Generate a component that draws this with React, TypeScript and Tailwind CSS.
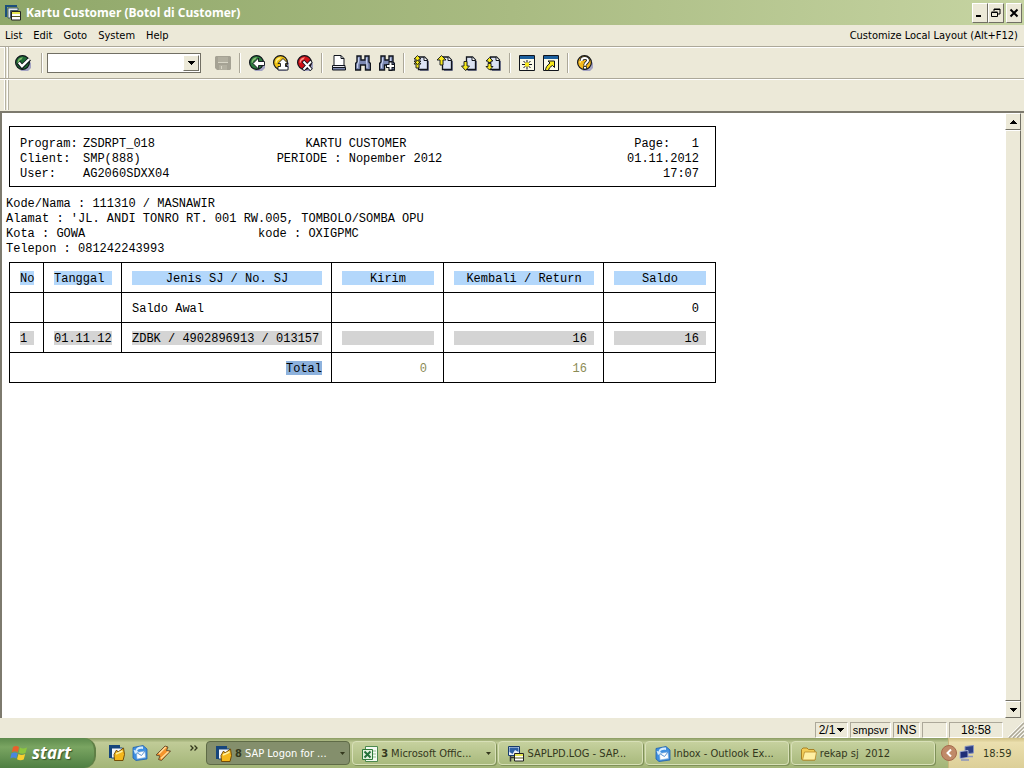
import type { ReactNode } from 'react'

const INK = '#10141c'

function Glyph({ children }: { children: ReactNode }) {
  return (
    <svg viewBox="0 0 16 16" className="h-4 w-4 shrink-0" aria-hidden="true">
      {children}
    </svg>
  )
}

function Ball({ color, light, children }: { color: string; light: string; children: ReactNode }) {
  return (
    <Glyph>
      <path d="M5 16h8l3-3V7l-3 3z" fill="#a3a3c2" />
      <circle cx="7.5" cy="7.5" r="6.9" fill={color} stroke={INK} strokeWidth="1.2" />
      <path d="M2.5 7.5c0-3 2-5 5.500-5.200L6.500 4.500C4.500 5 4 6 3.500 8z" fill={light} />
      {children}
    </Glyph>
  )
}

function EnterIcon() {
  return (
    <Ball color="#1f6a35" light="#7fb86a">
      <path d="M3.500 7.500l3.500 4L14.500 4" fill="none" stroke={INK} strokeWidth="4.200" />
      <path d="M3.800 7.500L7 11.200l7.300-7.200" fill="none" stroke="#fff" strokeWidth="2.400" />
    </Ball>
  )
}

function SaveIcon() {
  return (
    <Glyph>
      <path d="M0 2l1-1h14l1 1v12l-1 1H2l-2-2z" fill="#a5a294" />
      <path d="M3 2h10v5H3zM4 10h8v5H4z" fill="#b2afa0" />
      <path d="M3 7.500h10M6.500 11v3" stroke="#d8d5c6" strokeWidth="1" />
    </Glyph>
  )
}

function BackIcon() {
  return (
    <Ball color="#2b7a3d" light="#8cc076">
      <path d="M4 8.500l5.500-5.500v3.500h6v4h-6V14z" fill="#fff" stroke={INK} strokeWidth=".9" />
    </Ball>
  )
}

function ExitIcon() {
  return (
    <Ball color="#f2c313" light="#fff08a">
      <path d="M10 3.500l5 5h-2.500v3H15v3.500H5v-3.500h2.500v-3H5z" fill="#fff" stroke={INK} strokeWidth=".9" />
    </Ball>
  )
}

function CancelIcon() {
  return (
    <Ball color="#cf1118" light="#ff8f85">
      <path d="M6 6l8.500 9M14.500 6L6 15" stroke={INK} strokeWidth="3.600" />
      <path d="M6.500 6.500l7.500 8M14 6.500l-7.500 8" stroke="#fff" strokeWidth="1.900" />
    </Ball>
  )
}

function PrintIcon() {
  return (
    <Glyph>
      <path d="M3 .5h7l3 3v7H3z" fill="#fff" stroke={INK} />
      <path d="M10 .5v3h3" fill="none" stroke={INK} />
      <path d="M1.500 10.500h12.500v2H1.500z" fill="#e8e8f2" stroke={INK} />
      <path d="M1.500 12.500h13v2.500h-13z" fill="#7d88ad" stroke={INK} />
    </Glyph>
  )
}

function FindIcon({ next }: { next?: boolean }) {
  return (
    <Glyph>
      <path
        d="M2 1h4v4h4V1h4v6l1.500 1.500V15h-5v-5h-5v5h-5V8.500L2 7z"
        fill="#7c89b4"
        stroke={INK}
        strokeWidth="1.400"
      />
      <path d="M3.500 2.500V7l-1 2.500V13M11.500 2.500V7l.5 2.500V13" fill="none" stroke="#c6d0ec" strokeWidth="1.200" />
      {next && (
        <>
          <path d="M11.500 6v10M7 11h9" stroke={INK} strokeWidth="4" />
          <path d="M11.500 7.500v7M8 11h7" stroke="#fff" strokeWidth="2" />
        </>
      )}
    </Glyph>
  )
}

function PageIcon({ kind }: { kind: 'first' | 'prev' | 'next' | 'last' }) {
  const arrows = {
    first: 'M4.500.5L8 4H6v2h2L4.500 9.500 1 6h2V4H1zM4.500 5L8 9H6v4H3V9H1z',
    prev: 'M4.500.5L9 5H6v5H3V5H0z',
    next: 'M3 6.500h3V11h2.500L4.500 15.500.5 11H3z',
    last: 'M4.500 2.500L8 6H6v1.500H3V6H1zM4.500 15L8 11.500H6V8.500H3v3H1z',
  }
  return (
    <Glyph>
      <path d="M7 15.500h8.500V6" fill="none" stroke="#777b94" strokeWidth="1" />
      <path d="M5.500 2h6L14.500 5v9.500h-9z" fill="#dbe2f3" stroke={INK} strokeWidth="1.300" />
      <path d="M11 2v3.500h3.500" fill="#fff" stroke={INK} />
      <path d={arrows[kind]} fill="#f8e91b" stroke={INK} strokeWidth=".9" />
    </Glyph>
  )
}

function SessionIcon() {
  return (
    <Glyph>
      <path d="M.5.5h15v15H.5z" fill="#fbfae8" stroke={INK} />
      <path d="M1 1h14v3H1z" fill="#1b5f9e" />
      <path d="M8 5v3M8 11v3.500M3 9.500h3.500M9.500 9.500H13M4.500 6l2 2M11.500 6l-2 2M4.500 13l2-2M11.500 13l-2-2" stroke={INK} />
      <path d="M6 7.500h4v4H6z" fill="#f8e91b" />
    </Glyph>
  )
}

function ShortcutIcon() {
  return (
    <Glyph>
      <path d="M.5.5h15v15H.5z" fill="#fbfae8" stroke={INK} />
      <path d="M1 1h14v3H1z" fill="#1b5f9e" />
      <path d="M5 6h6.500v6.500L9.500 10.500C7 12 6 13 5.500 15.500h-3c0-3 1.500-5 4.500-7.500z" fill="#f8e91b" stroke={INK} strokeWidth="1" />
    </Glyph>
  )
}

function HelpIcon() {
  return (
    <Ball color="#f5b81c" light="#fff3a6">
      <path d="M4.500 6c0-4 6.500-4 6.500-.5 0 2-3 2.200-3 5" fill="none" stroke={INK} strokeWidth="3.600" />
      <path d="M4.500 6c0-4 6.500-4 6.500-.5 0 2-3 2.200-3 5" fill="none" stroke="#fff" strokeWidth="2" />
      <path d="M6.500 11.500h3v2.500h-3z" fill="#fff" stroke={INK} strokeWidth=".8" />
    </Ball>
  )
}

function WindowsStackIcon() {
  return (
    <Glyph>
      <path d="M0 0h12v2H2v10H0z" fill="#1c4e7c" />
      <path d="M3 3h10v2.500H5.500V13H3z" fill="#dfe6ee" stroke="#26435a" strokeWidth=".8" />
      <path d="M6.500 6.500h9v8.500h-9z" fill="#fff" stroke="#222" />
      <path d="M7 7h8v2H7z" fill="#e6e64f" />
      <path d="M7 11.500h8" stroke="#55591d" />
    </Glyph>
  )
}

function SapIcon() {
  return (
    <Glyph>
      <path d="M0 0h11v13H0z" fill="#16457c" />
      <path d="M2.500 3h11v10h-11z" fill="#f4f6fa" stroke="#16457c" />
      <path d="M5 9.500L7.500 5l1.500 2 5.500-4 1 6.500L14 15.500H5.500z" fill="#f5b81c" stroke="#6b4300" strokeWidth=".9" />
      <path d="M7 9l6.500-3" stroke="#fff0a0" strokeWidth="1.500" />
    </Glyph>
  )
}

function OutlookIcon() {
  return (
    <Glyph>
      <path d="M1 2.500L11 .5l4 3.500v10l-11 1.500L1 13z" fill="#3f8fe0" stroke="#1f5fae" strokeWidth=".8" />
      <path d="M4.500 7.500l8.500-1.500.5 6.500L5 14z" fill="#fff" stroke="#7ba9d9" strokeWidth=".6" />
      <path d="M4.500 7.500l5 3 3.500-4.500" fill="none" stroke="#5b93cf" />
      <path d="M11 1.500c-4-.5-7 1-7.500 4L1.500 4.800 3 9l3.500-2.500L5 6c1-2 3-2.500 6-2z" fill="#d5ecff" />
    </Glyph>
  )
}

function WinampIcon() {
  return (
    <Glyph>
      <path d="M1 10l9-9 3 1-1.500 3.500L15.500 6 6.500 15.500l-3-1L5 11z" fill="#f4932b" stroke="#5f4a2e" strokeWidth=".9" />
      <path d="M4 8.800L10.800 2M6 13.500l7.500-7" stroke="#ffdf9e" strokeWidth="1.400" />
    </Glyph>
  )
}

function ExcelIcon() {
  return (
    <Glyph>
      <path d="M3.500.5h12v15h-12z" fill="#f4faf2" stroke="#4d8a4f" />
      <path d="M11 5h3M11 8h3M11 11h3" stroke="#8fbf8f" />
      <path d="M.5 3.500h10v10H.5z" fill="#e3f2df" stroke="#2f7a3a" />
      <path d="M2.500 5.500l6 6M8.500 5.500l-6 6" stroke="#23713a" strokeWidth="2" />
    </Glyph>
  )
}

function SaplpdIcon() {
  return (
    <Glyph>
      <path d="M.5.5h11v9H.5z" fill="#e9eef8" stroke="#173c6c" />
      <path d="M1.500 1.500h9V6L7 4 4.500 8l-3-2z" fill="#2d5fa4" />
      <path d="M2.500 10v5.500M2 11.500h5" fill="none" stroke="#333" strokeWidth="1.500" />
      <path d="M6.500 7.500h9v7.500h-9z" fill="#fff" stroke="#222" />
      <path d="M7 8h8v2H7z" fill="#e6e64f" />
      <path d="M7 12h8" stroke="#55591d" />
    </Glyph>
  )
}

function FolderIcon() {
  return (
    <Glyph>
      <path d="M.5 3.500L2 2h4l1.500 1.500H13l1 1.500v9H1.500l-1-1z" fill="#f2cc57" stroke="#a2791c" strokeWidth=".9" />
      <path d="M3.500 6h12l-1.500 8H1.500z" fill="#fff0a3" stroke="#b98e2b" strokeWidth=".8" />
    </Glyph>
  )
}

function FlagIcon() {
  return (
    <svg viewBox="0 0 18 18" className="h-[18px] w-[18px] shrink-0" aria-hidden="true">
      <path d="M3 3c2-1.300 4-1.300 6 0L7.800 8.300C6 7 4 7 1.800 8.300z" fill="#e8602c" />
      <path d="M10 3.500c2 1.200 4 1.200 7 0L15.500 9c-2.500 1.200-4.500 1-6.800-.2z" fill="#8dc63f" />
      <path d="M1.500 9.300c2-1.200 4-1.200 6 0L6.300 14.500c-2-1.200-4-1.200-6 0z" fill="#4a86e0" />
      <path d="M8.500 10c2 1.200 4 1.200 6.700 0l-1.500 5.500c-2.500 1.200-4.500 1-6.700-.2z" fill="#f9cf2e" />
    </svg>
  )
}

function NetworkIcon() {
  return (
    <Glyph>
      <path d="M6 1.500l8.500-1v7.500l-8.500 1z" fill="#2d3f86" stroke="#8a94bd" />
      <path d="M1 6.500l8-1v7l-8 1z" fill="#1e2d77" stroke="#a9b3d4" />
      <path d="M2 15h8M9 11.500h5" stroke="#8a94bd" strokeWidth="1.600" />
    </Glyph>
  )
}

function Triangle({ up }: { up?: boolean }) {
  return (
    <svg viewBox="0 0 7 4" className="h-1 w-[7px] shrink-0" shapeRendering="crispEdges" aria-hidden="true">
      <path d={up ? 'M3 0h1l3 4H0z' : 'M0 0h7L4 4H3z'} fill="#000" />
    </svg>
  )
}

function Separator() {
  return <div className="mx-1 h-5 w-[2px] border-l border-[#aca899] bg-white" />
}

function Grip() {
  return (
    <div className="flex gap-px self-stretch">
      <div className="w-[2px] border-l border-white bg-[#b5b2a2]" />
      <div className="w-[2px] border-l border-white bg-[#b5b2a2]" />
    </div>
  )
}

function ToolButton({ label, disabled, children }: { label: string; disabled?: boolean; children: ReactNode }) {
  return (
    <button type="button" aria-label={label} disabled={disabled} className="flex h-6 w-6 items-center justify-center">
      {children}
    </button>
  )
}

function CaptionButton({ label, className = '', children }: { label: string; className?: string; children: ReactNode }) {
  return (
    <button
      type="button"
      aria-label={label}
      className={`flex h-5 w-4 items-center justify-center border border-t-white border-r-[#716f64] border-b-[#716f64] border-l-white bg-[#ece9d8] ${className}`}
    >
      <svg viewBox="0 0 10 10" className="h-[10px] w-[10px] shrink-0" aria-hidden="true">
        {children}
      </svg>
    </button>
  )
}

const menus = ['List', 'Edit', 'Goto', 'System', 'Help']

function TitleBar() {
  return (
    <header className="flex h-[25px] shrink-0 items-center bg-linear-to-r from-[#8fa769] via-[#a9bb82] to-[#c6d4a2] pr-[2px] pl-[5px]">
      <WindowsStackIcon />
      <h1 className="ml-[5px] flex-1 font-['Open_Sans','Noto_Sans',sans-serif] text-[12px] font-bold text-white">
        Kartu Customer (Botol di Customer)
      </h1>
      <CaptionButton label="Minimize">
        <path d="M1 8h5" stroke="#000" strokeWidth="2" />
      </CaptionButton>
      <CaptionButton label="Restore">
        <path d="M3 3V1h6v5H7M3 1.500h6" fill="none" stroke="#000" />
        <path d="M.5 4.500h6v4h-6zM.5 4h6" fill="none" stroke="#000" />
      </CaptionButton>
      <CaptionButton label="Close" className="ml-[2px]">
        <path d="M1.500 1.500l7 7M8.500 1.500l-7 7" stroke="#000" strokeWidth="2" />
      </CaptionButton>
    </header>
  )
}

function MenuBar() {
  return (
    <nav className="flex h-[21px] shrink-0 items-center gap-[11px] pr-1.5 pl-[5px]">
      {menus.map((item) => (
        <button key={item} type="button">
          {item}
        </button>
      ))}
      <span className="ml-auto">Customize Local Layout (Alt+F12)</span>
    </nav>
  )
}

function Toolbar() {
  return (
    <div className="flex h-8 shrink-0 items-center border-t border-[#aca899] pl-1 shadow-[inset_0_1px_0_#fff]">
      <Grip />
      <div className="ml-0.5 flex items-center">
        <ToolButton label="Enter">
          <EnterIcon />
        </ToolButton>
        <div className="w-0.5" />
        <Separator />
        <div className="flex h-5 w-[154px] border border-[#716f64] bg-white p-px">
          <input aria-label="Command" className="min-w-0 flex-1 bg-white px-1 outline-none" />
          <button
            type="button"
            aria-label="Command history"
            className="flex w-4 items-center justify-center border border-t-white border-r-[#716f64] border-b-[#716f64] border-l-white bg-[#ece9d8]"
          >
            <Triangle />
          </button>
        </div>
        <div className="w-2.5" />
        <ToolButton label="Save" disabled>
          <SaveIcon />
        </ToolButton>
        <Separator />
        <ToolButton label="Back">
          <BackIcon />
        </ToolButton>
        <ToolButton label="Exit">
          <ExitIcon />
        </ToolButton>
        <ToolButton label="Cancel">
          <CancelIcon />
        </ToolButton>
        <Separator />
        <ToolButton label="Print">
          <PrintIcon />
        </ToolButton>
        <ToolButton label="Find">
          <FindIcon />
        </ToolButton>
        <ToolButton label="Find next">
          <FindIcon next />
        </ToolButton>
        <Separator />
        <ToolButton label="First page">
          <PageIcon kind="first" />
        </ToolButton>
        <ToolButton label="Previous page">
          <PageIcon kind="prev" />
        </ToolButton>
        <ToolButton label="Next page">
          <PageIcon kind="next" />
        </ToolButton>
        <ToolButton label="Last page">
          <PageIcon kind="last" />
        </ToolButton>
        <Separator />
        <ToolButton label="New session">
          <SessionIcon />
        </ToolButton>
        <ToolButton label="Create shortcut">
          <ShortcutIcon />
        </ToolButton>
        <Separator />
        <ToolButton label="Help">
          <HelpIcon />
        </ToolButton>
      </div>
    </div>
  )
}

type Tone = 'head' | 'row' | 'total' | 'sum' | 'plain'

const tones: Record<Tone, string> = {
  head: 'bg-[#b3d7fb]',
  row: 'bg-[#d4d4d4]',
  total: 'bg-[#8db2dd]',
  sum: 'text-[#8b8b55]',
  plain: '',
}

const aligns = {
  left: 'text-left',
  center: 'text-center',
  right: 'text-right pr-[7px]',
}

function Field({ tone = 'plain', align = 'left', children }: { tone?: Tone; align?: keyof typeof aligns; children?: ReactNode }) {
  return <div className={`h-[14px] leading-[16px] ${tones[tone]} ${aligns[align]}`}>{children}</div>
}

const columns = ['No', 'Tanggal', 'Jenis SJ / No. SJ', 'Kirim', 'Kembali / Return', 'Saldo']

const cell = 'h-[30px] border border-black pt-px pr-[9px] pb-0 pl-[10px] font-normal'

function Report() {
  return (
    <main className="min-w-0 flex-1 overflow-hidden bg-white pt-[13px] font-['Liberation_Mono',monospace] text-[12px] leading-[15px] whitespace-pre text-black">
      <section className="ml-[7px] grid w-[707px] grid-cols-[1fr_auto_1fr] border border-black pt-[10px] pr-4 pb-1 pl-[10px]">
        <dl className="grid grid-cols-[63px_auto] justify-start">
          <dt>Program:</dt>
          <dd>ZSDRPT_018</dd>
          <dt>Client:</dt>
          <dd>SMP(888)</dd>
          <dt>User:</dt>
          <dd>AG2060SDXX04</dd>
        </dl>
        <div className="text-center">
          <h2 className="pr-[7px]">KARTU CUSTOMER</h2>
          <p>PERIODE : Nopember 2012</p>
        </div>
        <div className="text-right">
          <p>Page:   1</p>
          <p>01.11.2012</p>
          <p>17:07</p>
        </div>
      </section>

      <section className="mt-[10px] ml-1">
        <p>Kode/Nama : 111310 / MASNAWIR</p>
        <p>Alamat : 'JL. ANDI TONRO RT. 001 RW.005, TOMBOLO/SOMBA OPU</p>
        <div className="flex">
          <p className="w-[252px]">Kota : GOWA</p>
          <p>kode : OXIGPMC</p>
        </div>
        <p>Telepon : 081242243993</p>
      </section>

      <table className="mt-[5px] ml-[7px] w-[707px] table-fixed border-collapse">
        <colgroup>
          <col className="w-[34px]" />
          <col className="w-[78px]" />
          <col className="w-[210px]" />
          <col className="w-[112px]" />
          <col className="w-[160px]" />
          <col className="w-[112px]" />
        </colgroup>
        <thead>
          <tr>
            {columns.map((name, i) => (
              <th key={name} scope="col" className={cell}>
                <Field tone="head" align={i < 2 ? 'left' : 'center'}>
                  {name}
                </Field>
              </th>
            ))}
          </tr>
        </thead>
        <tbody>
          <tr>
            <td className={cell} />
            <td className={cell} />
            <td className={cell}>
              <Field>Saldo Awal</Field>
            </td>
            <td className={cell} />
            <td className={cell} />
            <td className={cell}>
              <Field align="right">0</Field>
            </td>
          </tr>
          <tr>
            <td className={cell}>
              <Field tone="row">1</Field>
            </td>
            <td className={cell}>
              <Field tone="row">01.11.12</Field>
            </td>
            <td className={cell}>
              <Field tone="row">ZDBK / 4902896913 / 013157</Field>
            </td>
            <td className={cell}>
              <Field tone="row" />
            </td>
            <td className={cell}>
              <Field tone="row" align="right">
                16
              </Field>
            </td>
            <td className={cell}>
              <Field tone="row" align="right">
                16
              </Field>
            </td>
          </tr>
        </tbody>
        <tfoot>
          <tr>
            <th scope="row" colSpan={3} className={cell}>
              <div className="flex justify-end">
                <Field tone="total">Total</Field>
              </div>
            </th>
            <td className={cell}>
              <Field tone="sum" align="right">
                0
              </Field>
            </td>
            <td className={cell}>
              <Field tone="sum" align="right">
                16
              </Field>
            </td>
            <td className={cell} />
          </tr>
        </tfoot>
      </table>
    </main>
  )
}

const raised = 'border border-t-white border-r-[#716f64] border-b-[#716f64] border-l-white bg-[#ece9d8]'

function ScrollBar() {
  return (
    <div className="mr-[3px] flex w-4 shrink-0 flex-col">
      <button type="button" aria-label="Scroll up" className={`flex h-[17px] items-center justify-center ${raised}`}>
        <Triangle up />
      </button>
      <div className={`flex-1 ${raised}`} />
      <button type="button" aria-label="Scroll down" className={`flex h-[17px] items-center justify-center ${raised}`}>
        <Triangle />
      </button>
    </div>
  )
}

const sunken = 'flex h-4 items-center justify-center border border-t-[#aca899] border-r-white border-b-white border-l-[#aca899]'

function StatusBar() {
  return (
    <footer className="flex h-5 shrink-0 items-end justify-end gap-[2px] font-['Liberation_Sans',sans-serif] text-[12px]">
      <button type="button" className={`w-[33px] gap-0.5 ${sunken}`}>
        2/1 <Triangle />
      </button>
      <span className={`w-[41px] text-[11px] ${sunken}`}>smpsvr</span>
      <span className={`w-[27px] ${sunken}`}>INS</span>
      <span className={`w-[25px] ${sunken}`} />
      <span className={`w-[54px] ${sunken}`}>18:58</span>
      <svg viewBox="0 0 16 16" className="ml-[3px] h-4 w-4" aria-hidden="true">
        <path d="M1 16L16 1M5 16L16 5M9 16l7-7M13 16l3-3" stroke="#aca899" strokeWidth="1.500" />
        <path d="M0 15L15 0M4 15L16 3.500M8 15l8-8M12 15l4-4" stroke="#fff" strokeWidth=".8" />
      </svg>
    </footer>
  )
}

const tasks = [
  { icon: <SapIcon />, count: '8', label: 'SAP Logon for ...', active: true },
  { icon: <ExcelIcon />, count: '3', label: 'Microsoft Offic...', active: false },
  { icon: <SaplpdIcon />, label: 'SAPLPD.LOG - SAP...', active: false },
  { icon: <OutlookIcon />, label: 'Inbox - Outlook Ex...', active: false },
  { icon: <FolderIcon />, label: 'rekap sj  2012', active: false },
]

function TaskBar() {
  return (
    <div className="flex h-[30px] shrink-0 bg-linear-to-b from-[#8b9c62] via-[#c0cb97] via-15% to-[#a3b577] text-[#33371c]">
      <button
        type="button"
        className="flex w-24 shrink-0 items-center gap-1 rounded-r-xl border-r-2 border-[#5f7f45] bg-linear-to-b from-[#5d8a4c] via-[#7aa562] via-30% to-[#4f7f42] pl-2.5 font-['Open_Sans','Noto_Sans',sans-serif] text-[17px] font-bold text-white italic [text-shadow:1px_1px_1px_#36552c]"
      >
        <FlagIcon />
        start
      </button>
      <div className="flex w-[109px] shrink-0 items-center gap-[7px] pl-[13px]">
        <SapIcon />
        <OutlookIcon />
        <WinampIcon />
        <svg viewBox="0 0 8 6" className="mb-2.5 ml-3 h-1.5 w-2" aria-hidden="true">
          <path d="M.5.5L3 3 .5 5.500M4.500.5L7 3 4.500 5.500" fill="none" stroke="#33371c" strokeWidth="1.300" />
        </svg>
      </div>
      <div className="flex min-w-0 flex-1 items-center">
        {tasks.map((task) => (
          <button
            key={task.label}
            type="button"
            className={`mx-px flex h-6 min-w-0 flex-1 items-center rounded-sm border pt-px pr-1 pl-[9px] ${
              task.active
                ? 'border-[#5f6b47] bg-[#848f6c] text-white'
                : 'border-[#d8e0b8] bg-linear-to-b from-[#c6d19e] to-[#a9ba7d] shadow-[1px_1px_0_#7f9159]'
            }`}
          >
            {task.icon}
            {task.count && <b className="ml-[3px] text-[#33371c]">{task.count}</b>}
            <span className="ml-[3px] whitespace-pre">{task.label}</span>
            {task.count && (
              <svg viewBox="0 0 5 3" className="ml-auto h-[3px] w-[5px] shrink-0" aria-hidden="true">
                <path d="M0 0h5L2.500 3z" fill="#33371c" />
              </svg>
            )}
          </button>
        ))}
      </div>
      <div className="ml-3 flex w-[76px] shrink-0 items-center border-l border-[#c9b97c] bg-linear-to-b from-[#cfc084] via-[#ebdfae] via-15% to-[#dccf98]">
        <button
          type="button"
          aria-label="Show hidden icons"
          className="-ml-2 flex h-4 w-4 shrink-0 items-center justify-center rounded-full border border-[#a66a4d] bg-[#c08a68]"
        >
          <svg viewBox="0 0 6 8" className="h-2 w-1.5" aria-hidden="true">
            <path d="M5 .5L1.500 4 5 7.500" fill="none" stroke="#fff" strokeWidth="2" />
          </svg>
        </button>
        <span className="ml-0.5">
          <NetworkIcon />
        </span>
        <time className="ml-2 pt-px">18:59</time>
      </div>
    </div>
  )
}

export default function App() {
  return (
    <div className="flex h-screen flex-col overflow-hidden bg-[#ece9d8] font-['DejaVu_Sans_Condensed','DejaVu_Sans',sans-serif] text-[11px] leading-[14px] text-black">
      <TitleBar />
      <MenuBar />
      <Toolbar />
      <div className="flex h-[33px] shrink-0 items-stretch border-t border-[#aca899] pt-px pb-px pl-1 shadow-[inset_0_1px_0_#fff]">
        <Grip />
      </div>
      <div className="flex min-h-0 flex-1 border-t-2 border-l-2 border-[#7d7a6e]">
        <Report />
        <ScrollBar />
      </div>
      <StatusBar />
      <TaskBar />
    </div>
  )
}
